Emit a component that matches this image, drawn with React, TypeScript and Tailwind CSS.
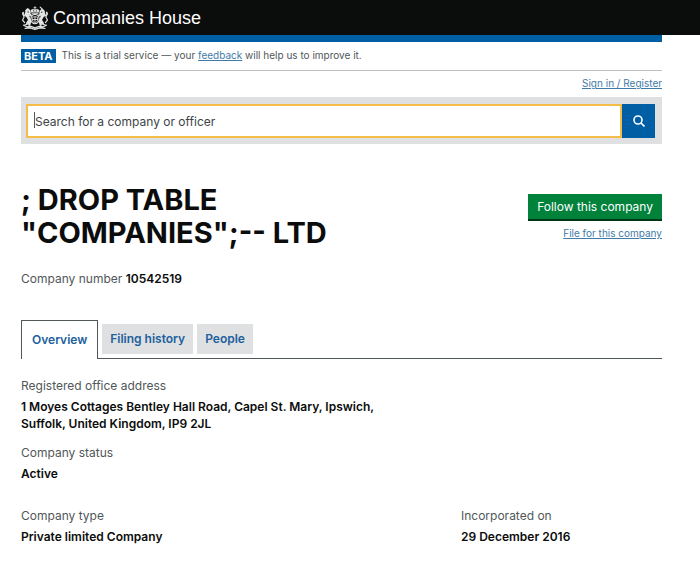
const tabs = ["Filing history", "People"];

function Crest() {
    return (
        <svg viewBox="0 0 54 46" className="w-7 h-6 shrink-0" fill="none" stroke="#e4e4e4" strokeLinecap="round" strokeLinejoin="round" aria-hidden="true">
            {/* crown */}
            <path d="M27 1v4M25 3h4" strokeWidth="1.5" />
            <path d="M20 12c-3-4 1-7 7-5 6-2 10 1 7 5z" fill="#e4e4e4" strokeWidth="1" />
            <path d="M21 15h12" strokeWidth="2" />
            <path d="M24 8l1 3M30 8l-1 3" stroke="#0b0c0c" strokeWidth="1" />
            {/* lion */}
            <path d="M10 9l3-3 3 3 1 4-3 2 5 3" strokeWidth="4" />
            <path d="M11 11l-2 5 4 5 3 6-4 6M13 15l2 8 3 5-2 8" strokeWidth="4.5" />
            <path d="M9 19l-5-3 1-3M7 32l-4-5 3-6-3-6 1-3M14 34l-8 3" strokeWidth="2.2" />
            {/* unicorn */}
            <path d="M44 10l-3-3-3 3-1 4 3 1-5 3" strokeWidth="3.6" />
            <path d="M43 11l2 5-4 5-3 6 4 6M41 15l-2 8-3 5 2 8" strokeWidth="4.5" />
            <path d="M41 6l-4-4M45 19l5-3-1-4M47 32l4-5-3-6 3-6-1-3M40 34l8 3" strokeWidth="2.2" />
            {/* shield and garter */}
            <ellipse cx="27" cy="25" rx="8" ry="9" fill="#0b0c0c" strokeWidth="2.2" />
            <path d="M22 21h10v6c0 3-3 5-5 6-2-1-5-3-5-6z" strokeWidth="1.5" />
            <path d="M27 20v12M22 26h10" strokeWidth="1.8" />
            {/* motto scroll */}
            <path d="M5 37l7 3 7-1 8 3 8-3 7 1 7-3M8 43l9-1 10 3 10-3 9 1" strokeWidth="2.4" />
        </svg>
    );
}

function Field({ label, children }: { label: string; children: React.ReactNode }) {
    return (
        <div>
            <dt className="leading-5 text-[#505759]">{label}</dt>
            <dd className="mt-0.5 leading-[17px] font-semibold">{children}</dd>
        </div>
    );
}

export default function App() {
    return (
        <div className="min-h-screen bg-white text-[#0b0c0c] text-xs font-['Inter','Open_Sans',sans-serif]">
            <header className="bg-[#0b0c0c] h-[35px] pl-[21px] flex items-center gap-1">
                <Crest />
                <a href="#" className="text-white text-lg font-['Liberation_Sans',sans-serif]">Companies House</a>
            </header>

            <main className="pl-[21px] pr-[38px]">
                <div className="h-[7px] bg-[#005ea5]"></div>
                <div className="flex items-center gap-1.5 h-[29px] border-b border-[#bfc1c3] text-[10px]">
                    <strong className="bg-[#005ea5] text-white text-[11px] px-[3px] leading-[14px]">BETA</strong>
                    <p className="text-[#505759]">
                        This is a trial service — your <a href="#" className="underline text-[#3f7ba6]">feedback</a> will help us to improve it.
                    </p>
                </div>
                <div className="flex justify-end h-[26px] items-center text-[10px]">
                    <a href="#" className="underline text-[#3f7ba6]">Sign in / Register</a>
                </div>

                <form className="flex bg-[#dee0e2] pl-[5px] pr-[7px] pt-[7px] pb-1.5" onSubmit={(e) => e.preventDefault()}>
                    <div className="relative flex-1 flex">
                        <input
                            type="text"
                            aria-label="Search for a company or officer"
                            placeholder="Search for a company or officer"
                            className="w-full h-[34px] bg-white border-2 border-[#f3bd48] px-[7px] outline-none placeholder:text-[#3d4446]"
                        />
                        <span className="absolute left-2 top-2 w-px h-4 bg-[#505759]"></span>
                    </div>
                    <button type="submit" aria-label="Search" className="w-[33px] bg-[#005ea5] flex items-center justify-center">
                        <svg viewBox="0 0 12 12" className="w-3 h-3" fill="none" stroke="white" strokeWidth="1.6">
                            <circle cx="5" cy="5" r="4" />
                            <path d="M8 8l3.5 3.5" />
                        </svg>
                    </button>
                </form>

                <div className="flex justify-between items-start mt-[39px]">
                    <h1 className="text-[29px] leading-[33px] font-bold">
                        ; DROP TABLE<br />"COMPANIES";-- LTD
                    </h1>
                    <div className="flex flex-col items-end mt-[11px]">
                        <button type="button" className="bg-[#00823b] text-white px-[9px] h-[27px] border-b-2 border-[#003618]">Follow this company</button>
                        <a href="#" className="mt-1 text-[10px] leading-4 underline text-[#3f7ba6]">File for this company</a>
                    </div>
                </div>

                <p className="mt-5 leading-5 text-[#505759]">
                    Company number <strong className="font-semibold text-[#0b0c0c]">10542519</strong>
                </p>

                <nav className="mt-[31px] flex items-end border-b border-[#505759] font-semibold text-[#1d619d]">
                    <a href="#" className="-mb-px h-[39px] px-2.5 flex items-center bg-white border border-b-0 border-[#505759]">Overview</a>
                    {tabs.map((tab) => (
                        <a key={tab} href="#" className="ml-1 mb-1 h-[30px] px-2 flex items-center bg-[#dee0e2]">{tab}</a>
                    ))}
                </nav>

                <dl className="mt-[17px] pb-6">
                    <Field label="Registered office address">
                        1 Moyes Cottages Bentley Hall Road, Capel St. Mary, Ipswich,<br />Suffolk, United Kingdom, IP9 2JL
                    </Field>
                    <div className="mt-[11px]">
                        <Field label="Company status">Active</Field>
                    </div>
                    <div className="mt-6 grid grid-cols-[440fr_201fr]">
                        <Field label="Company type">Private limited Company</Field>
                        <Field label="Incorporated on">29 December 2016</Field>
                    </div>
                </dl>
            </main>
        </div>
    );
}
